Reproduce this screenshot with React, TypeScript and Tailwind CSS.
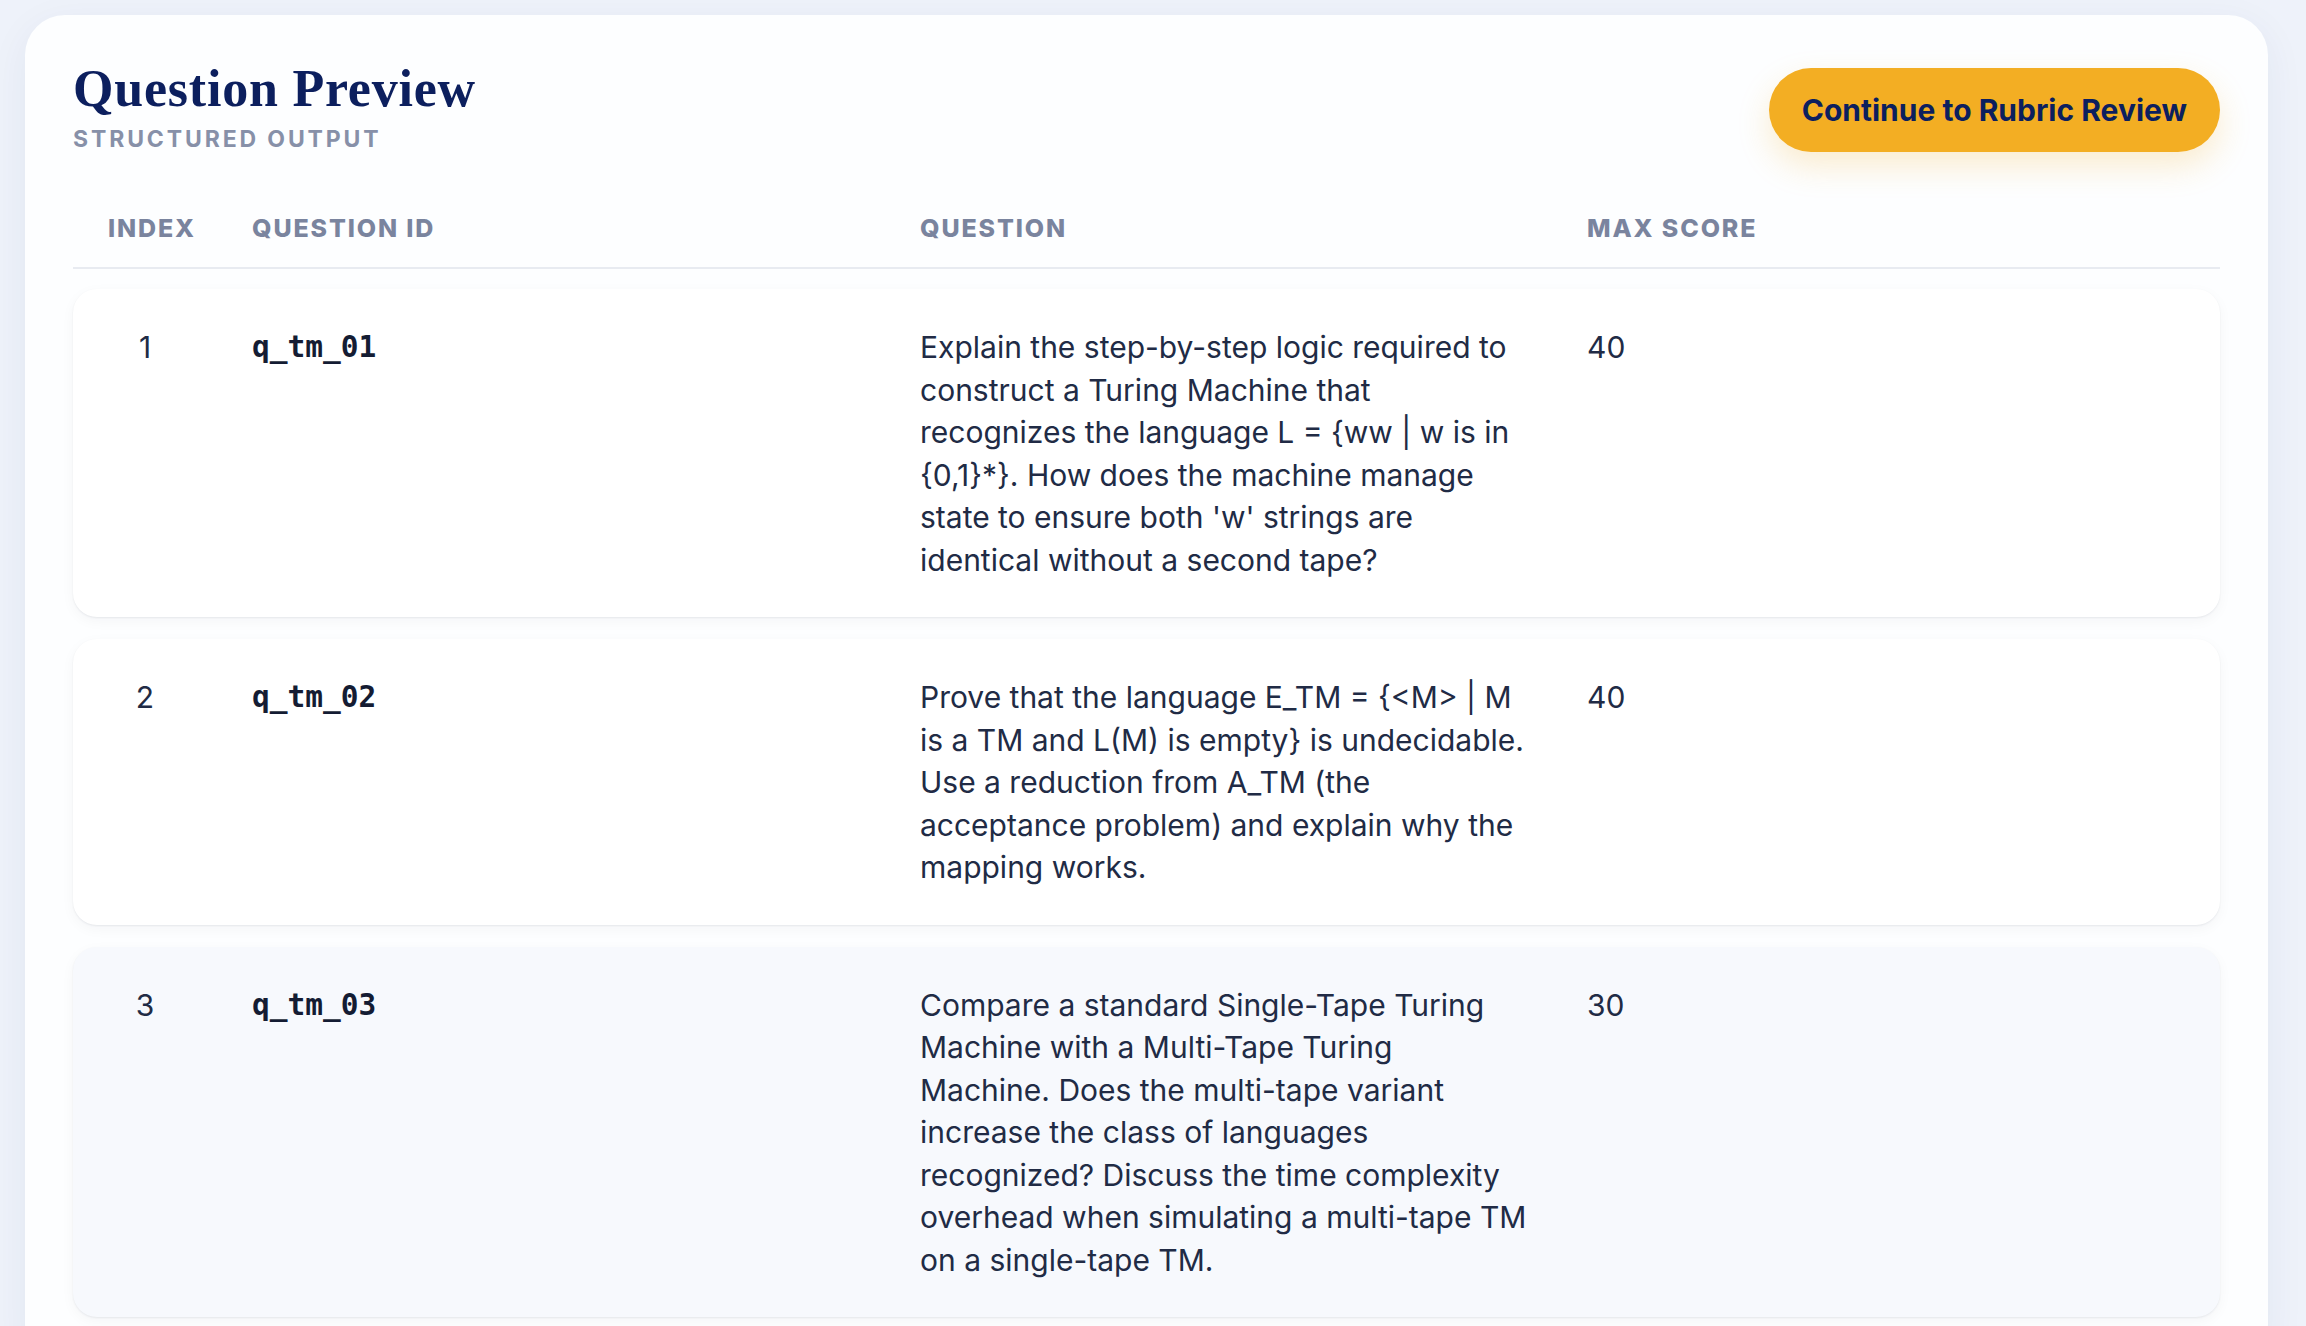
import React from "react";

type Question = {
  index: number;
  id: string;
  text: string;
  maxScore: number;
};

const questions: Question[] = [
  {
    index: 1,
    id: "q_tm_01",
    text: "Explain the step-by-step logic required to construct a Turing Machine that recognizes the language L = {ww | w is in {0,1}*}. How does the machine manage state to ensure both 'w' strings are identical without a second tape?",
    maxScore: 40,
  },
  {
    index: 2,
    id: "q_tm_02",
    text: "Prove that the language E_TM = {<M> | M is a TM and L(M) is empty} is undecidable. Use a reduction from A_TM (the acceptance problem) and explain why the mapping works.",
    maxScore: 40,
  },
  {
    index: 3,
    id: "q_tm_03",
    text: "Compare a standard Single-Tape Turing Machine with a Multi-Tape Turing Machine. Does the multi-tape variant increase the class of languages recognized? Discuss the time complexity overhead when simulating a multi-tape TM on a single-tape TM.",
    maxScore: 30,
  },
];

const cols = "grid grid-cols-[144px_668px_667px_1fr]";

export default function App() {
  const activeRow = 3;

  return (
    <div className="min-h-screen bg-[#eef2fa] pl-[25px] pr-[38px] pt-[15px] font-['Inter',sans-serif]">
      <div className="rounded-[40px] bg-[#fdfeff] px-[48px] pt-[48px] pb-[48px] shadow-[0_10px_40px_rgba(30,50,100,0.06)]">
        {/* Header */}
        <div className="flex items-start justify-between">
          <div className="flex flex-col">
            <h1 className="font-['Liberation_Serif',serif] text-[52px] font-bold leading-[52px] tracking-[0.015em] text-[#0c1f5e]">
              Question Preview
            </h1>
            <p className="mt-[13px] text-[23px] font-bold uppercase leading-[23px] tracking-[0.125em] text-[#8790a8]">
              Structured Output
            </p>
          </div>
          <button className="mt-[5px] h-[84px] rounded-full bg-[#f3ae23] px-[33px] text-[30px] font-bold text-[#0c1f5e] shadow-[0_14px_32px_rgba(243,174,35,0.22)]">
            Continue to Rubric Review
          </button>
        </div>

        {/* Table */}
        <div className="mt-[64px]">
          <div className={`${cols} border-b-2 border-[#e8ebf1] pb-[27px] text-[25px] font-extrabold uppercase leading-[24px] tracking-[0.075em] text-[#7a849e]`}>
            <div className="px-[35px]">Index</div>
            <div className="px-[35px]">Question ID</div>
            <div className="px-[35px]">Question</div>
            <div className="px-[35px]">Max Score</div>
          </div>

          <div className="mt-[20px] flex flex-col gap-[22px]">
            {questions.map((q) => (
              <div
                key={q.id}
                className={`${cols} rounded-[24px] pt-[37px] pb-[36px] text-[30px] leading-[42.5px] text-[#212b45] shadow-[0_1px_2px_rgba(15,23,42,0.07),0_4px_14px_rgba(15,23,42,0.04)] ${
                  q.index === activeRow ? "bg-[#f7f9fd]" : "bg-white"
                }`}
              >
                <div className="px-[35px] text-center">{q.index}</div>
                <div className="px-[35px] font-['DejaVu_Sans_Mono',monospace] text-[29.5px] font-bold text-[#141c33]">
                  {q.id}
                </div>
                <div className="pl-[35px] pr-[25px]">{q.text}</div>
                <div className="px-[35px]">{q.maxScore}</div>
              </div>
            ))}
          </div>
        </div>
      </div>
    </div>
  );
}
